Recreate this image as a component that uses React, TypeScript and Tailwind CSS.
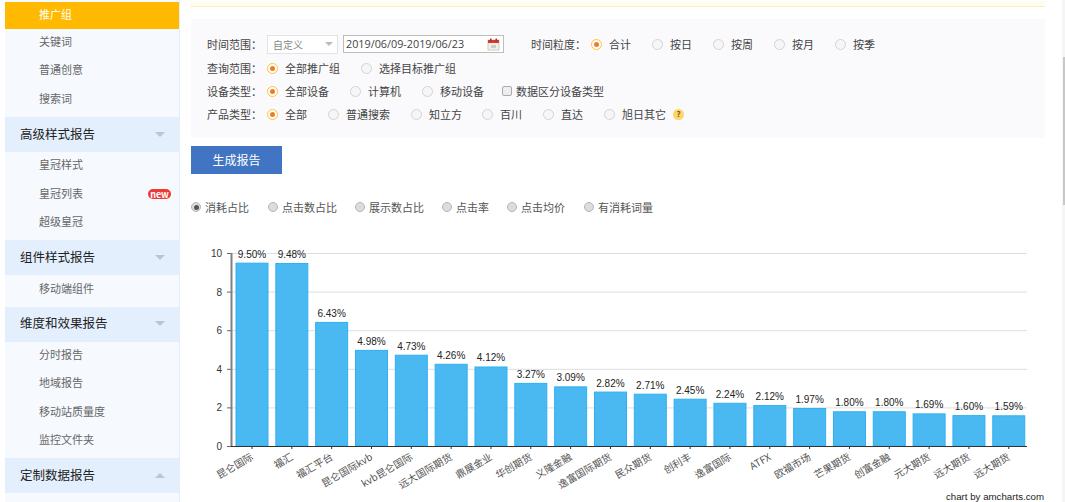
import React from "react";

const CJK = '"Noto Sans CJK SC", "Liberation Sans", sans-serif';

function Item({ label, active, badge, h = "h-[28.4px]" }: { label: string; active?: boolean; badge?: boolean; h?: string }) {
  return (
    <div className={`relative flex items-center pb-[3px] pl-[34px] text-[11px] ${h} ${active ? "bg-[#ffb900] text-white" : "text-[#666]"}`}>
      {label}
      {badge && (
        <span className="absolute right-2 top-[9px] flex h-[10px] w-[23px] items-center justify-center rounded-full bg-[#ee3a33] text-[9px] leading-none font-bold text-white">new</span>
      )}
    </div>
  );
}

function Head({ label, up }: { label: string; up?: boolean }) {
  return (
    <div className="flex h-[35px] items-center justify-between bg-[#e3effd] pb-[1px] pl-[15px] pr-[14px] text-[12.5px] text-[#222]">
      <span>{label}</span>
      <span className={`h-0 w-0 border-x-[5px] border-x-transparent ${up ? "border-b-[5px] border-b-[#bcc6d2]" : "border-t-[5px] border-t-[#bcc6d2]"}`} />
    </div>
  );
}

function Radio({ label, on, ml = 0, w }: { label: string; on?: boolean; ml?: number; w?: number }) {
  return (
    <span className="flex items-center" style={{ marginLeft: ml }}>
      {on ? (
        <span className="flex h-[11px] w-[11px] items-center justify-center rounded-full border border-[#ffc437] bg-white">
          <span className="h-[5px] w-[5px] rounded-full bg-[#ee7d2a]" />
        </span>
      ) : (
        <span className="h-[11px] w-[11px] rounded-full border border-[#d4d4d4] bg-[#f6f6f6]" />
      )}
      <span className="ml-[7px] text-[#444]" style={w ? { width: w } : undefined}>{label}</span>
    </span>
  );
}

function GrayRadio({ label, on, ml = 0 }: { label: string; on?: boolean; ml?: number }) {
  return (
    <span className="flex items-center" style={{ marginLeft: ml }}>
      <span className="flex h-[10px] w-[10px] items-center justify-center rounded-full border border-[#b5b5b5] bg-[#dcdcdc]">
        {on && <span className="h-[5px] w-[5px] rounded-full bg-[#555]" />}
      </span>
      <span className="ml-1 text-[#555]">{label}</span>
    </span>
  );
}

const data: [string, number, string][] = [
  ["昆仑国际", 9.5, "9.50%"],
  ["福汇", 9.48, "9.48%"],
  ["福汇平台", 6.43, "6.43%"],
  ["昆仑国际kvb", 4.98, "4.98%"],
  ["kvb昆仑国际", 4.73, "4.73%"],
  ["远大国际期货", 4.26, "4.26%"],
  ["鼎展金业", 4.12, "4.12%"],
  ["华创期货", 3.27, "3.27%"],
  ["义隆金融", 3.09, "3.09%"],
  ["逸富国际期货", 2.82, "2.82%"],
  ["民众期货", 2.71, "2.71%"],
  ["创利丰", 2.45, "2.45%"],
  ["逸富国际", 2.24, "2.24%"],
  ["ATFX", 2.12, "2.12%"],
  ["欧福市场", 1.97, "1.97%"],
  ["芒果期货", 1.8, "1.80%"],
  ["创富金融", 1.8, "1.80%"],
  ["元大期货", 1.69, "1.69%"],
  ["远大期货", 1.6, "1.60%"],
  ["远大期货", 1.59, "1.59%"],
];

function Chart() {
  // svg origin sits at page (191, 240)
  const x0 = 40;
  const yBase = 206;
  const unit = 19.3;
  const step = 39.83;
  return (
    <svg width="854" height="262" className="block" style={{ fontFamily: CJK }}>
      {[2, 4, 6, 8, 10].map((v) => (
        <line key={v} x1={x0} x2={836} y1={yBase - v * unit + 0.5} y2={yBase - v * unit + 0.5} stroke="#dedede" />
      ))}
      {data.map(([name, v, txt], i) => {
        const x = 45 + i * step;
        const cx = x + 16;
        const top = yBase + 0.5 - v * unit;
        return (
          <g key={i}>
            <rect x={x} y={top} width={32} height={yBase - top} fill="#4ab9f2" stroke="#2fb0f2" strokeWidth="1" />
            <line x1={cx} x2={cx} y1={yBase} y2={yBase + 3} stroke="#333" />
            <text x={cx} y={top - 5.5} textAnchor="middle" fontSize="10" fill="#222" style={{ fontFamily: '"Liberation Sans", sans-serif' }}>{txt}</text>
            <text
              x={cx + 2}
              y={yBase + 13}
              textAnchor="end"
              fontSize="10"
              fill="#555"
              transform={`rotate(-30 ${cx + 2} ${yBase + 13})`}
            >
              {name}
            </text>
          </g>
        );
      })}
      <line x1={x0 + 0.5} x2={x0 + 0.5} y1={13} y2={yBase} stroke="#808080" strokeWidth="2" />
      <line x1={x0} x2={836} y1={yBase + 0.5} y2={yBase + 0.5} stroke="#333" />
      {[0, 2, 4, 6, 8, 10].map((v) => (
        <g key={v}>
          <line x1={x0 - 4} x2={x0} y1={yBase - v * unit + 0.5} y2={yBase - v * unit + 0.5} stroke="#666" />
          <text x={x0 - 9} y={yBase - v * unit + 4} textAnchor="end" fontSize="10" fill="#333" style={{ fontFamily: '"Liberation Sans", sans-serif' }}>{v}</text>
        </g>
      ))}
      <text x={755} y={260} fontSize="9.7" fill="#222" style={{ fontFamily: '"Liberation Sans", sans-serif' }}>chart by amcharts.com</text>
    </svg>
  );
}

export default function App() {
  return (
    <div className="relative flex h-[502px] w-[1065px] overflow-hidden bg-white" style={{ fontFamily: CJK }}>
      <aside className="ml-[5px] h-full w-[175px] shrink-0 border-r border-[#e4eefb] bg-[#f6faff] pt-[2px]">
        <Item label="推广组" active h="h-[27px]" />
        <Item label="关键词" h="h-[28px]" />
        <Item label="普通创意" h="h-[28px]" />
        <Item label="搜索词" h="h-[29px]" />
        <div className="h-[3px]" />
        <Head label="高级样式报告" />
        <Item label="皇冠样式" />
        <Item label="皇冠列表" badge />
        <Item label="超级皇冠" />
        <div className="h-[3px]" />
        <Head label="组件样式报告" />
        <Item label="移动端组件" />
        <div className="h-[3px]" />
        <Head label="维度和效果报告" />
        <Item label="分时报告" />
        <Item label="地域报告" />
        <Item label="移动站质量度" />
        <Item label="监控文件夹" />
        <div className="h-[3px]" />
        <Head label="定制数据报告" up />
      </aside>

      <main className="ml-[11px] w-[854px] shrink-0 pt-[1px] text-[11px]">
        <div className="h-[6px] border-b border-[#fdeeb4] bg-[#fffdf2]" />
        <section className="mt-3 h-[119px] bg-[#fafafd] pl-4 pt-[15px] text-[#444]">
          <div className="flex h-[20px] items-center">
            <span className="w-[60px]">时间范围：</span>
            <span className="flex h-[19px] w-[71px] items-center justify-between border border-[#e3e3e3] bg-white pl-[5px] pr-[3px] text-[10px] text-[#888]">
              自定义
              <span className="mr-[1px] h-0 w-0 border-x-[4px] border-t-[4px] border-x-transparent border-t-[#bbb]" />
            </span>
            <span className="ml-[5px] flex h-[18px] w-[161px] items-center justify-between border border-[#bdbdbd] bg-white pl-[2px] pr-[3px] text-[10.8px] text-[#444]" style={{ fontFamily: '"Open Sans", sans-serif' }}>
              2019/06/09-2019/06/23
              <svg width="13" height="13" viewBox="0 0 13 13">
                <rect x="1" y="2" width="11" height="10" fill="#f4efe4" stroke="#ccc" />
                <rect x="1" y="2" width="11" height="3" fill="#d8392c" />
                <rect x="3" y="0.5" width="1.5" height="3" fill="#a33" />
                <rect x="8.5" y="0.5" width="1.5" height="3" fill="#a33" />
                <rect x="4" y="7" width="5" height="3" fill="#ccc" />
              </svg>
            </span>
            <span className="ml-[27px] w-[60px]">时间粒度：</span>
            <Radio label="合计" on w={22} />
            <Radio label="按日" ml={21} />
            <Radio label="按周" ml={21} />
            <Radio label="按月" ml={21} />
            <Radio label="按季" ml={21} />
          </div>
          <div className="mt-[5px] flex h-[18px] items-center">
            <span className="w-[60px]">查询范围：</span>
            <Radio label="全部推广组" on />
            <Radio label="选择目标推广组" ml={21} />
          </div>
          <div className="mt-[5px] flex h-[18px] items-center">
            <span className="w-[60px]">设备类型：</span>
            <Radio label="全部设备" on />
            <Radio label="计算机" ml={21} />
            <Radio label="移动设备" ml={21} />
            <span className="ml-[18px] mr-[4px] h-[10px] w-[10px] rounded-[2px] border border-[#aaa] bg-[#eee]" />
            <span>数据区分设备类型</span>
          </div>
          <div className="mt-[5px] flex h-[18px] items-center">
            <span className="w-[60px]">产品类型：</span>
            <Radio label="全部" on />
            <Radio label="普通搜索" ml={21} />
            <Radio label="知立方" ml={21} />
            <Radio label="百川" ml={20} />
            <Radio label="直达" ml={21} />
            <Radio label="旭日其它" ml={21} />
            <span className="ml-[7px] flex h-[11px] w-[11px] items-center justify-center rounded-full bg-[#ffd56b] text-[8px] leading-none font-bold text-[#7a5a10]">?</span>
          </div>
        </section>
        <button className="mt-2 block h-[28px] w-[91px] bg-[#4174c3] text-[12px] text-white">生成报告</button>
        <div className="mt-[25px] flex h-[16px] items-center">
          <GrayRadio label="消耗占比" on />
          <GrayRadio label="点击数占比" ml={19} />
          <GrayRadio label="展示数占比" ml={18} />
          <GrayRadio label="点击率" ml={18} />
          <GrayRadio label="点击均价" ml={18} />
          <GrayRadio label="有消耗词量" ml={19} />
        </div>
        <div className="mt-[25px]">
          <Chart />
        </div>
      </main>

      <div className="absolute right-0 top-0 h-full w-[3px] bg-[#f5f5f5]">
        <div className="ml-[1px] mt-[57px] h-[148px] w-[2px] bg-[#c8c8c8]" />
      </div>
    </div>
  );
}
